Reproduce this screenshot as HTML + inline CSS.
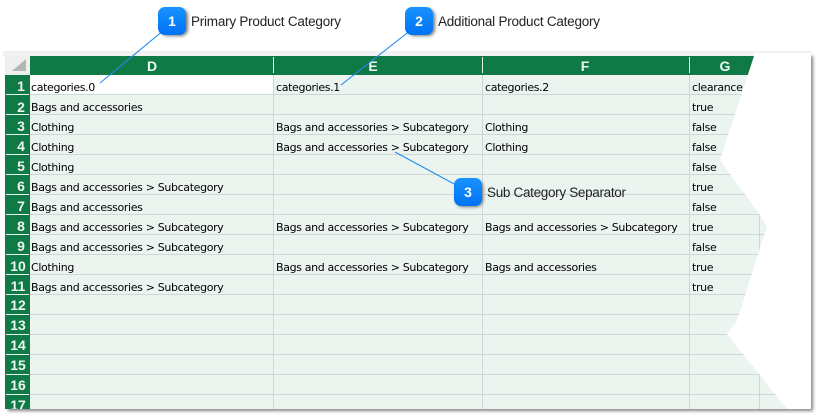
<!DOCTYPE html>
<html><head><meta charset="utf-8"><style>
html,body{margin:0;padding:0;background:#fff}
body{position:relative;width:820px;height:418px;overflow:hidden}
#p{position:absolute;left:0;top:0}
</style></head><body>
<svg id="p" width="820" height="418" viewBox="0 0 820 418" xmlns="http://www.w3.org/2000/svg">
<defs>
<filter id="sh" x="-50%" y="-50%" width="200%" height="200%"><feGaussianBlur stdDeviation="1.5"/></filter>
<linearGradient id="bl" x1="0" y1="0" x2="0" y2="1"><stop offset="0" stop-color="#1a92ff"/><stop offset="1" stop-color="#0073f5"/></linearGradient>
<clipPath id="cl"><rect x="5" y="53" width="806" height="356"/></clipPath>
</defs>
<!-- sheet shadow -->
<rect x="8" y="56" width="805" height="355" fill="#777" filter="url(#sh)" opacity=".9"/>
<rect x="3" y="51" width="808" height="6" fill="#f0f0f0" opacity=".9"/>
<rect x="5" y="53" width="806" height="356" fill="#fff"/>
<!-- sheet bg -->
<rect x="5" y="53" width="806" height="3" fill="#f1f2f1"/>
<rect x="30" y="75" width="781" height="334" fill="#ecf4ef"/>
<rect x="30" y="75" width="243" height="19" fill="#fff"/>
<rect x="5" y="56" width="25" height="19" fill="#eef0ee"/>
<polygon points="26,59 26,71 12,71" fill="#b4b6b4"/>
<rect x="30" y="56" width="781" height="19" fill="#107a46"/>
<rect x="5" y="75" width="25" height="334" fill="#107a46"/>
<!-- grid -->
<g fill="#cdd8d5">
<rect x="30" y="94" width="781" height="1"/><rect x="30" y="114" width="781" height="1"/><rect x="30" y="134" width="781" height="1"/><rect x="30" y="154" width="781" height="1"/><rect x="30" y="174" width="781" height="1"/><rect x="30" y="194" width="781" height="1"/><rect x="30" y="214" width="781" height="1"/><rect x="30" y="234" width="781" height="1"/><rect x="30" y="254" width="781" height="1"/><rect x="30" y="274" width="781" height="1"/><rect x="30" y="294" width="781" height="1"/><rect x="30" y="314" width="781" height="1"/><rect x="30" y="334" width="781" height="1"/><rect x="30" y="354" width="781" height="1"/><rect x="30" y="374" width="781" height="1"/><rect x="30" y="394" width="781" height="1"/>
<rect x="273" y="75" width="1" height="334"/><rect x="482" y="75" width="1" height="334"/><rect x="689" y="75" width="1" height="334"/><rect x="759" y="215" width="1" height="194"/>
</g>
<g fill="#e6f0ea"><rect x="273" y="57" width="1" height="16"/><rect x="482" y="57" width="1" height="16"/><rect x="689" y="57" width="1" height="16"/></g>
<g fill="#e9f2ec">
<rect x="6" y="94" width="23" height="1"/><rect x="6" y="114" width="23" height="1"/><rect x="6" y="134" width="23" height="1"/><rect x="6" y="154" width="23" height="1"/><rect x="6" y="174" width="23" height="1"/><rect x="6" y="194" width="23" height="1"/><rect x="6" y="214" width="23" height="1"/><rect x="6" y="234" width="23" height="1"/><rect x="6" y="254" width="23" height="1"/><rect x="6" y="274" width="23" height="1"/><rect x="6" y="294" width="23" height="1"/><rect x="6" y="314" width="23" height="1"/><rect x="6" y="334" width="23" height="1"/><rect x="6" y="354" width="23" height="1"/><rect x="6" y="374" width="23" height="1"/><rect x="6" y="394" width="23" height="1"/>
</g>
<!-- torn edge -->
<polygon points="755,53 720,160 760,215 767,227 760,248 737,321 727,334 787,409 811,409 811,53" fill="#fff"/>
<!-- headers -->
<g clip-path="url(#cl)" font-family="'Liberation Sans',sans-serif" font-size="14" font-weight="700" fill="#eef6f1" text-anchor="middle">
<text x="152" y="71">D</text><text x="373" y="71">E</text><text x="585" y="71">F</text><text x="725" y="71">G</text>
<text x="21" y="91">1</text><text x="21" y="112">2</text><text x="21" y="131">3</text><text x="21" y="151">4</text><text x="21" y="171">5</text><text x="21" y="191">6</text><text x="21" y="211">7</text><text x="21" y="231">8</text><text x="21" y="251">9</text><text x="18" y="271">10</text><text x="18" y="291">11</text><text x="18" y="310">12</text><text x="18" y="330">13</text><text x="18" y="350">14</text><text x="18" y="370">15</text><text x="18" y="390">16</text><text x="18" y="410">17</text>
</g>
<!-- cells -->
<g font-family="'DejaVu Sans',sans-serif" font-size="11" fill="#000" letter-spacing="-0.35">
<text x="31" y="91">categories.0</text><text x="276" y="91">categories.1</text><text x="485" y="91">categories.2</text><text x="692" y="91">clearance</text>
<text x="31" y="111">Bags and accessories</text><text x="692" y="111">true</text>
<text x="31" y="131">Clothing</text><text x="276" y="131">Bags and accessories &gt; Subcategory</text><text x="485" y="131">Clothing</text><text x="692" y="131">false</text>
<text x="31" y="151">Clothing</text><text x="276" y="151">Bags and accessories &gt; Subcategory</text><text x="485" y="151">Clothing</text><text x="692" y="151">false</text>
<text x="31" y="171">Clothing</text><text x="692" y="171">false</text>
<text x="31" y="191">Bags and accessories &gt; Subcategory</text><text x="692" y="191">true</text>
<text x="31" y="211">Bags and accessories</text><text x="692" y="211">false</text>
<text x="31" y="231">Bags and accessories &gt; Subcategory</text><text x="276" y="231">Bags and accessories &gt; Subcategory</text><text x="485" y="231">Bags and accessories &gt; Subcategory</text><text x="692" y="231">true</text>
<text x="31" y="251">Bags and accessories &gt; Subcategory</text><text x="692" y="251">false</text>
<text x="31" y="271">Clothing</text><text x="276" y="271">Bags and accessories &gt; Subcategory</text><text x="485" y="271">Bags and accessories</text><text x="692" y="271">true</text>
<text x="31" y="291">Bags and accessories &gt; Subcategory</text><text x="692" y="291">true</text>
</g>
<!-- callouts -->
<g stroke="#1e8cf0" stroke-width="1.1" fill="none">
<line x1="100" y1="83" x2="164" y2="30"/><line x1="341" y1="85" x2="411" y2="30"/><line x1="395" y1="152" x2="456" y2="185"/>
</g>
<g fill="#333" opacity=".65" filter="url(#sh)">
<rect x="161" y="9" width="27" height="27" rx="7"/><rect x="408" y="9" width="27" height="27" rx="7"/><rect x="456" y="180" width="27" height="27" rx="7"/>
</g>
<g fill="url(#bl)">
<rect x="158" y="7" width="28" height="28" rx="7"/><rect x="405" y="7" width="28" height="28" rx="7"/><rect x="454" y="178" width="28" height="28" rx="7"/>
</g>
<g font-family="'Liberation Sans',sans-serif" font-size="14" fill="#fff" text-anchor="middle" font-weight="700">
<text x="172" y="26">1</text><text x="419" y="26">2</text><text x="468" y="197">3</text>
</g>
<g font-family="'Liberation Sans',sans-serif" font-size="13.5" fill="#222">
<text x="191" y="26" textLength="150" lengthAdjust="spacing">Primary Product Category</text>
<text x="438" y="26" textLength="162" lengthAdjust="spacing">Additional Product Category</text>
<text x="487" y="197" textLength="139" lengthAdjust="spacing">Sub Category Separator</text>
</g>
</svg>
</body></html>
